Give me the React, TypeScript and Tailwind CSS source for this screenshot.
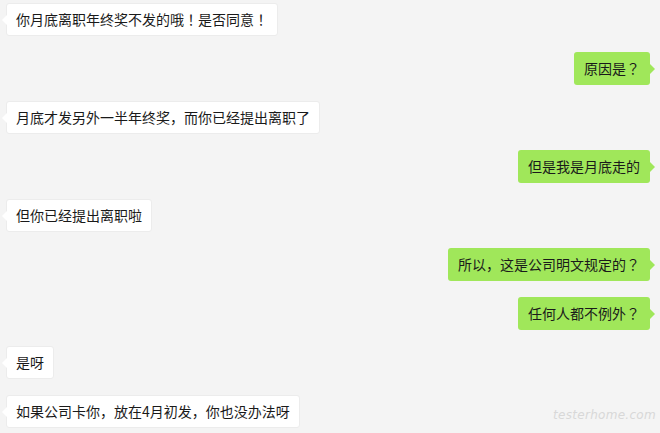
import React from "react";

type Msg = { text: string; me: boolean };

const msgs: Msg[] = [
  { text: "你月底离职年终奖不发的哦！是否同意！", me: false },
  { text: "原因是？", me: true },
  { text: "月底才发另外一半年终奖，而你已经提出离职了", me: false },
  { text: "但是我是月底走的", me: true },
  { text: "但你已经提出离职啦", me: false },
  { text: "所以，这是公司明文规定的？", me: true },
  { text: "任何人都不例外？", me: true },
  { text: "是呀", me: false },
  { text: "如果公司卡你，放在4月初发，你也没办法呀", me: false },
];

function Txt({ t }: { t: string }) {
  const parts = t.split(/([！？])/);
  return (
    <>
      {parts.map((p, i) =>
        p === "！" || p === "？" ? (
          <span
            key={i}
            className="inline-block w-[14px] text-center"
            style={{ fontFamily: '"Noto Sans CJK TC", sans-serif' }}
          >
            {p}
          </span>
        ) : (
          <span key={i}>{p}</span>
        )
      )}
    </>
  );
}

function Bubble({ m }: { m: Msg }) {
  if (m.me) {
    return (
      <div className="flex justify-end pr-[10px]">
        <div className="relative flex h-[33px] items-center whitespace-nowrap rounded-[3px] bg-[#a0e75a] px-[10px] text-[14px] text-[#1a1a1a]">
          <Txt t={m.text} />
          <span className="absolute right-[-5px] top-1/2 h-0 w-0 -translate-y-1/2 border-y-[5px] border-l-[5px] border-y-transparent border-l-[#a0e75a]" />
        </div>
      </div>
    );
  }
  return (
    <div className="flex justify-start pl-[6px]">
      <div className="relative flex h-[33px] items-center whitespace-nowrap rounded-[3px] border border-[#ececec] bg-white px-[9px] text-[14px] text-[#1a1a1a]">
        <Txt t={m.text} />
        <span className="absolute left-[-5px] top-1/2 h-0 w-0 -translate-y-1/2 border-y-[5px] border-r-[5px] border-y-transparent border-r-white" />
      </div>
    </div>
  );
}

export default function App() {
  return (
    <div
      className="relative h-[433px] w-[660px] overflow-hidden bg-[#f4f4f4]"
      style={{ fontFamily: '"Noto Sans CJK SC", "Noto Sans", sans-serif' }}
    >
      <div className="flex flex-col gap-[16px] pt-[3px]">
        {msgs.map((m, i) => (
          <Bubble key={i} m={m} />
        ))}
      </div>
      <div
        className="absolute bottom-[9px] right-[4px] text-[12px] font-extralight italic tracking-[0.3px] text-[#d8d8d8]"
        style={{ fontFamily: '"DejaVu Sans", sans-serif' }}
      >
        testerhome.com
      </div>
    </div>
  );
}
